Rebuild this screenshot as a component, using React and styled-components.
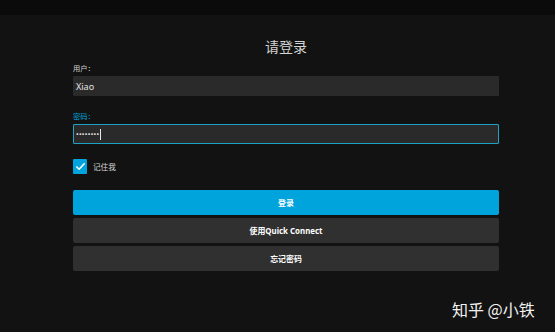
import React from "react";
import styled, { createGlobalStyle } from "styled-components";

const GlobalStyle = createGlobalStyle`
    html, body {
        margin: 0;
        padding: 0;
        background: #121212;
    }
    body {
        font-family: "Noto Sans", "Noto Sans CJK SC", sans-serif;
        color: #ddd;
    }
`;

const Page = styled.div`
    position: relative;
    width: 555px;
    height: 332px;
    background: #121212;
    overflow: hidden;
`;

const TopBar = styled.div`
    height: 15px;
    background: #0b0b0b;
`;

const Form = styled.div`
    display: flex;
    flex-direction: column;
    padding: 0 56px 0 73px;
`;

const Title = styled.h1`
    margin: 24px 0 0;
    font-size: 14px;
    line-height: 16px;
    font-weight: 400;
    text-align: center;
    color: #d4d4d4;
`;

const Field = styled.div`
    display: flex;
    flex-direction: column;
    gap: 3px;
    margin-top: ${p => p.$top}px;
`;

const Label = styled.label`
    font-size: 7.3px;
    line-height: 10px;
    height: 10px;
    color: ${p => (p.$active ? "#00a4dc" : "#d0d0d0")};
`;

const Input = styled.div`
    box-sizing: border-box;
    height: 20px;
    background: #2a2a2a;
    border: 1px solid ${p => (p.$active ? "#1fa3c4" : "#2a2a2a")};
    border-radius: 1px;
    display: flex;
    align-items: center;
    padding: 0 2px;
    font-size: 9px;
    color: #e6e6e6;
`;

const Dots = styled.span`
    font-size: 7px;
    letter-spacing: 0.3px;
    color: #e6e6e6;
`;

const Caret = styled.span`
    display: inline-block;
    width: 1px;
    height: 11px;
    margin-left: 1px;
    background: #e6e6e6;
`;

const CheckRow = styled.div`
    display: flex;
    align-items: center;
    gap: 6px;
    margin-top: 15px;
    height: 15px;
    font-size: 7.6px;
    color: #d8d8d8;
`;

const Box = styled.span`
    width: 14px;
    height: 15px;
    border-radius: 1px;
    background: #00a4dc;
    display: flex;
    align-items: center;
    justify-content: center;
`;

const Buttons = styled.div`
    display: flex;
    flex-direction: column;
    gap: 3px;
    margin-top: 16px;
`;

const Button = styled.div`
    height: 25px;
    border-radius: 2px;
    display: flex;
    align-items: center;
    justify-content: center;
    font-size: 7.9px;
    font-weight: 700;
    color: #fff;
    background: ${p => (p.$primary ? "#00a4dc" : "#303030")};
`;

const Watermark = styled.div`
    position: absolute;
    left: 452px;
    top: 299px;
    font-family: "Noto Sans CJK SC", sans-serif;
    font-size: 16px;
    line-height: 20px;
    color: #f2f2f2;
    white-space: nowrap;
`;

const App = () => {
    return (
        <Page>
            <GlobalStyle />
            <TopBar />
            <Form>
                <Title>请登录</Title>
                <Field $top={8}>
                    <Label>用户：</Label>
                    <Input>Xiao</Input>
                </Field>
                <Field $top={15}>
                    <Label $active>密码：</Label>
                    <Input $active>
                        <Dots>••••••••</Dots>
                        <Caret />
                    </Input>
                </Field>
                <CheckRow>
                    <Box>
                        <svg width="11" height="11" viewBox="0 0 24 24" fill="none" stroke="#fff" strokeWidth="3.5" strokeLinecap="round" strokeLinejoin="round">
                            <path d="M4 13l5 5L20 6" />
                        </svg>
                    </Box>
                    记住我
                </CheckRow>
                <Buttons>
                    <Button $primary>登录</Button>
                    <Button>使用Quick Connect</Button>
                    <Button>忘记密码</Button>
                </Buttons>
            </Form>
            <Watermark>知乎 @小铁</Watermark>
        </Page>
    );
};

export default App;
